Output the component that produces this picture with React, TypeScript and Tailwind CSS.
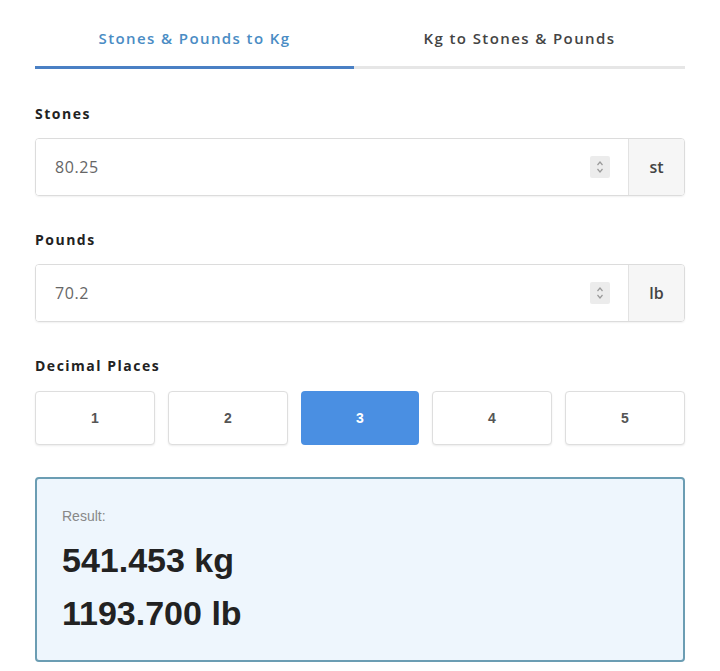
import React from "react";

function Spinner() {
  return (
    <div className="flex h-[22px] w-[20px] flex-col items-center justify-center bg-[#ececec] rounded-[2px]">
      <svg width="10" height="16" viewBox="0 0 10 16" fill="none" stroke="#9a9a9a" strokeWidth="1.2">
        <path d="M2.5 6 L5 3 L7.5 6" />
        <path d="M2.5 10 L5 13 L7.5 10" />
      </svg>
    </div>
  );
}

function NumberField({ value, unit }: { value: string; unit: string }) {
  return (
    <div className="flex h-[58px] rounded-[4px] border border-[#dcdcdc] shadow-[0_1px_2px_rgba(0,0,0,0.06)] overflow-hidden">
      <div className="flex flex-1 items-center pl-[19px] pr-[18px] bg-white">
        <span className="flex-1 text-[16px] tracking-[0.6px] text-[#666] font-['Open_Sans',sans-serif]">{value}</span>
        <Spinner />
      </div>
      <div className="flex w-[56px] items-center justify-center border-l border-[#e2e2e2] bg-[#f6f6f6] text-[16px] font-semibold text-[#444] font-['Open_Sans',sans-serif]">
        {unit}
      </div>
    </div>
  );
}

export default function App() {
  const places = ["1", "2", "3", "4", "5"];
  return (
    <div className="min-h-[671px] w-[720px] bg-white px-[35px] font-['Open_Sans',sans-serif]">
      <div className="flex">
        <div className="w-[319px] border-b-[3px] border-[#4a80c4] pt-[28px] pb-[18px] text-center text-[15px] leading-[20px] font-semibold tracking-[1.4px] text-[#4a8cc4]">
          Stones &amp; Pounds to Kg
        </div>
        <div className="flex-1 border-b-[3px] border-[#e6e6e6] pt-[28px] pb-[18px] text-center text-[15px] leading-[20px] font-semibold tracking-[1.4px] text-[#444]">
          Kg to Stones &amp; Pounds
        </div>
      </div>

      <div className="mt-[35px] mb-[14px] text-[14px] leading-[20px] font-bold tracking-[1.5px] text-[#222]">Stones</div>
      <NumberField value="80.25" unit="st" />

      <div className="mt-[34px] mb-[14px] text-[14px] leading-[20px] font-bold tracking-[1.5px] text-[#222]">Pounds</div>
      <NumberField value="70.2" unit="lb" />

      <div className="mt-[34px] mb-[15px] text-[14px] leading-[20px] font-bold tracking-[1.5px] text-[#222]">Decimal Places</div>
      <div className="flex gap-[13px]">
        {places.map((p) => (
          <div
            key={p}
            className={
              p === "3"
                ? "flex h-[54px] flex-1 items-center justify-center rounded-[4px] bg-[#4a8fe2] text-[14px] font-bold text-white font-['Liberation_Sans',sans-serif]"
                : "flex h-[54px] flex-1 items-center justify-center rounded-[4px] border border-[#dedede] shadow-[0_1px_2px_rgba(0,0,0,0.08)] bg-white text-[14px] font-bold text-[#555] font-['Liberation_Sans',sans-serif]"
            }
          >
            {p}
          </div>
        ))}
      </div>

      <div className="mt-[32px] h-[185px] rounded-[4px] border-2 border-[#6b9db3] bg-[#eef6fd] pl-[25px] pt-[27px]">
        <div className="text-[14px] leading-[20px] text-[#888] font-['Liberation_Sans',sans-serif]">Result:</div>
        <div className="mt-[14px] text-[34px] leading-[40px] font-bold text-[#222] font-['Liberation_Sans',sans-serif]">541.453 kg</div>
        <div className="mt-[13px] text-[34px] leading-[40px] font-bold text-[#222] font-['Liberation_Sans',sans-serif]">1193.700 lb</div>
      </div>
    </div>
  );
}
